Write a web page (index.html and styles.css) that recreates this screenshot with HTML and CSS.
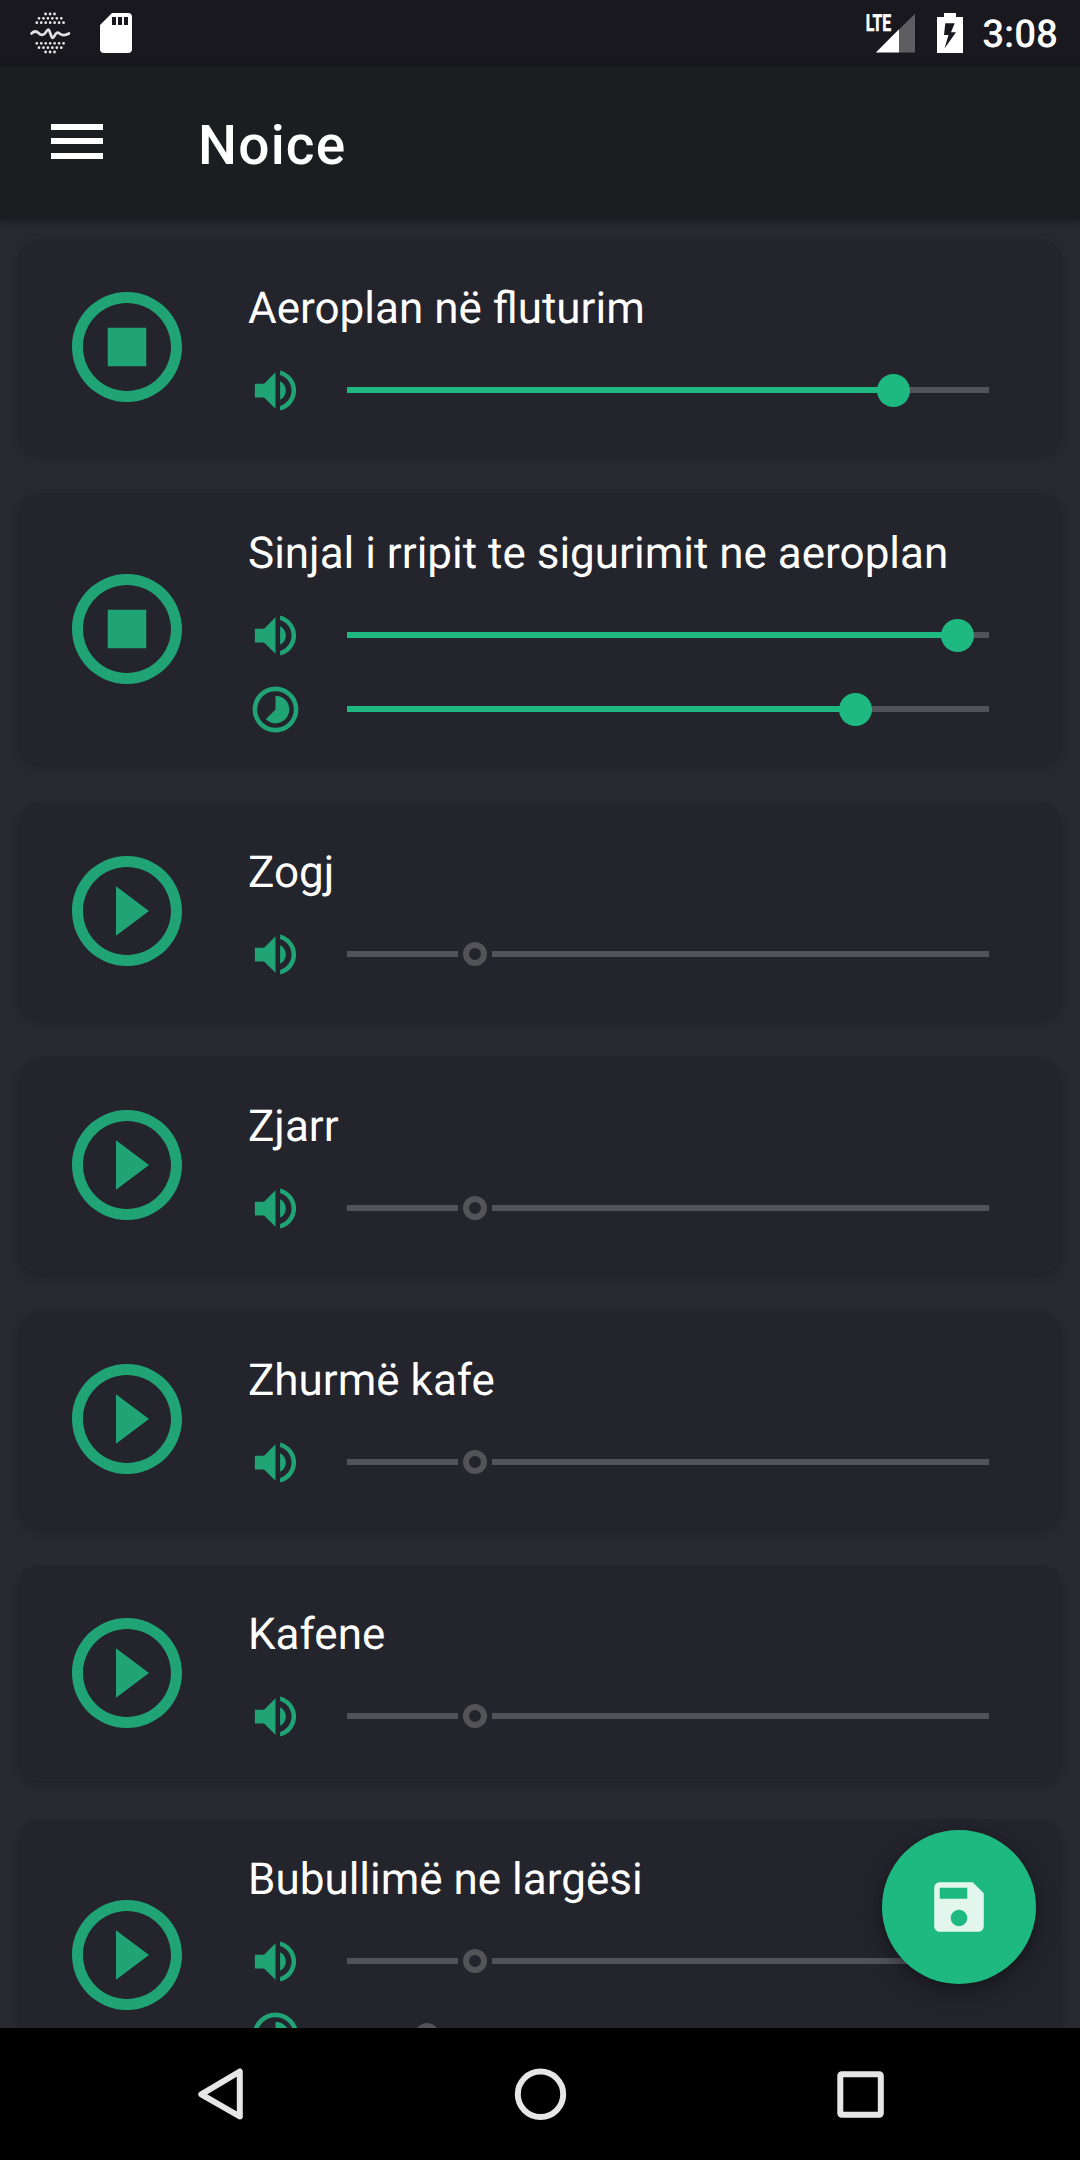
FILE: index.html
```html
<!DOCTYPE html>
<html lang="sq">
<head>
<meta charset="utf-8">
<title>Noice</title>
<link rel="stylesheet" href="styles.css">
</head>
<body>
<svg class="defs" aria-hidden="true">
  <symbol id="stop" viewBox="0 0 24 24"><path d="M12 2C6.48 2 2 6.48 2 12s4.48 10 10 10 10-4.48 10-10S17.52 2 12 2zm0 18c-4.41 0-8-3.59-8-8s3.59-8 8-8 8 3.59 8 8-3.59 8-8 8zM8.5 8.5h7v7h-7z"/></symbol>
  <symbol id="play" viewBox="0 0 24 24"><path d="M10 16.5l6-4.5-6-4.5v9zM12 2C6.48 2 2 6.48 2 12s4.48 10 10 10 10-4.48 10-10S17.52 2 12 2zm0 18c-4.41 0-8-3.59-8-8s3.59-8 8-8 8 3.59 8 8-3.59 8-8 8z"/></symbol>
  <symbol id="volume" viewBox="0 0 24 24"><path d="M3 9v6h4l5 5V4L7 9H3zm13.500 3c0-1.770-1.020-3.290-2.500-4.030v8.050c1.480-.73 2.500-2.250 2.500-4.020zM14 3.230v2.060c2.890.86 5 3.540 5 6.710s-2.110 5.850-5 6.710v2.060c4.010-.91 7-4.490 7-8.770s-2.990-7.860-7-8.770z"/></symbol>
  <symbol id="period" viewBox="0 0 24 24"><path d="M12 2a10 10 0 1 0 0 20 10 10 0 0 0 0-20zm0 18a8 8 0 1 1 0-16 8 8 0 0 1 0 16zM12 6v6l-4.240 4.240A6 6 0 1 0 12 6z"/></symbol>
</svg>
<div class="screen">
  <header class="status">
    <div class="status-group">
      <svg class="logo" viewBox="0 0 42 44">
        <g class="dots">
          <path d="M16.600 3h9M10 7.350h22.500M7.800 11.700h26.800M7.800 32.300h26.800M10 36.700h22.500M16.600 41h9"/>
        </g>
        <path class="wave" d="M2.500 22.500C5 20 7.500 20 9.500 22c2.500 2.700 5.500 2.700 7.400-.8 1.700-3.500 3-3.500 3.900-.2l1.600 4.200c.8 2.200 1.700 2.200 2.900 0 1.600-3.500 3-4.600 5.200-2.700 2.500 2 5.200 2.400 9.500 0"/>
      </svg>
      <svg class="sdcard" viewBox="0 0 32 40"><path fill-rule="evenodd" d="M12 0h16a4 4 0 0 1 4 4v32a4 4 0 0 1-4 4H4a4 4 0 0 1-4-4V12zM12 4v8h4V4zm6 0v8h4V4zm6 0v8h4V4z"/></svg>
    </div>
    <div class="status-group">
      <svg class="signal" viewBox="0 0 49 40">
        <text x="-.3" y="18" textLength="25.500" lengthAdjust="spacingAndGlyphs">LTE</text>
        <path class="weak" d="M33 16.500 49 .8V39.500H33z"/><path d="M9.800 39.500 33 16.200v23.300z"/>
      </svg>
      <svg class="battery" viewBox="0 0 26 40"><path fill-rule="evenodd" d="M7 0h12v4h7v36H0V4h7zM8.300 10.300 7 22h4.500L7.500 35.500 19 19.200h-5l3.700-8.900z"/></svg>
      <span class="clock">3:08</span>
    </div>
  </header>
  <div class="appbar">
    <div class="menu"><i></i><i></i><i></i></div>
    <h1>Noice</h1>
  </div>
  <main class="list">
    <article class="card"><svg class="toggle"><use href="#stop"/></svg><div class="body"><h2>Aeroplan në fluturim</h2>
      <div class="row"><svg class="icon"><use href="#volume"/></svg><div class="slider on" style="--v:85.1%"><b></b></div></div></div></article>
    <article class="card tall"><svg class="toggle"><use href="#stop"/></svg><div class="body"><h2>Sinjal i rripit te sigurimit ne aeroplan</h2>
      <div class="row"><svg class="icon"><use href="#volume"/></svg><div class="slider on" style="--v:95.1%"><b></b></div></div>
      <div class="row"><svg class="icon"><use href="#period"/></svg><div class="slider on" style="--v:79.2%"><b></b></div></div></div></article>
    <article class="card"><svg class="toggle"><use href="#play"/></svg><div class="body"><h2>Zogj</h2>
      <div class="row"><svg class="icon"><use href="#volume"/></svg><div class="slider" style="--v:128px"><b></b></div></div></div></article>
    <article class="card low"><svg class="toggle"><use href="#play"/></svg><div class="body"><h2>Zjarr</h2>
      <div class="row"><svg class="icon"><use href="#volume"/></svg><div class="slider" style="--v:128px"><b></b></div></div></div></article>
    <article class="card low"><svg class="toggle"><use href="#play"/></svg><div class="body"><h2>Zhurmë kafe</h2>
      <div class="row"><svg class="icon"><use href="#volume"/></svg><div class="slider" style="--v:128px"><b></b></div></div></div></article>
    <article class="card low"><svg class="toggle"><use href="#play"/></svg><div class="body"><h2>Kafene</h2>
      <div class="row"><svg class="icon"><use href="#volume"/></svg><div class="slider" style="--v:128px"><b></b></div></div></div></article>
    <article class="card tall low"><svg class="toggle"><use href="#play"/></svg><div class="body"><h2>Bubullimë ne largësi</h2>
      <div class="row"><svg class="icon"><use href="#volume"/></svg><div class="slider" style="--v:128px"><b></b></div></div>
      <div class="row"><svg class="icon"><use href="#period"/></svg><div class="slider" style="--v:80px"><b></b></div></div></div></article>
    <div class="fab"><svg viewBox="0 0 24 24"><path d="M17 3H5c-1.110 0-2 .9-2 2v14c0 1.100.89 2 2 2h14c1.100 0 2-.9 2-2V7l-4-4zm-5 16c-1.660 0-3-1.340-3-3s1.340-3 3-3 3 1.340 3 3-1.340 3-3 3zm3-10H5V5h10v4z"/></svg></div>
  </main>
  <nav class="nav">
    <svg viewBox="0 0 56 56"><path d="M9.300 28.300 47.800 5.500v45z"/></svg>
    <svg viewBox="0 0 56 56"><circle cx="28.500" cy="28.300" r="22.700"/></svg>
    <svg viewBox="0 0 56 56"><rect x="8.300" y="8.200" width="40.500" height="40.500" rx="1.500"/></svg>
  </nav>
</div>
</body>
</html>
```
FILE: styles.css
```css
* { box-sizing: border-box; }
body { margin: 0; background: #292932; color: #fff; font-family: Roboto, sans-serif; text-rendering: geometricPrecision; }
svg { display: block; flex: none; fill: #fff; }
.defs { display: none; }
h1, h2 { margin: 0; }

.screen { display: flex; flex-direction: column; width: 1080px; height: 2160px; overflow: hidden; }

.status { display: flex; justify-content: space-between; height: 66px; flex: none; padding: 11px 22px 0 29px; background: #19181e; }
.status-group { display: flex; align-items: flex-start; }
.logo { width: 42px; height: 44px; }
.dots { stroke: #e6e6e6; stroke-width: 2.8; stroke-linecap: round; stroke-dasharray: 0 4.46; }
.wave { fill: none; stroke: #e2e2e2; stroke-width: 2.7; stroke-linecap: round; stroke-linejoin: round; }
.sdcard { width: 32px; height: 40px; margin: 2px 0 0 29px; }
.signal { width: 49px; height: 40px; margin-top: 2px; overflow: visible; }
.signal text { font-size: 23.5px; font-weight: 700; stroke: #fff; stroke-width: .5px; }
.weak { fill: #5e5d61; }
.battery { width: 26px; height: 40px; margin: 2px 19px 0 22px; }
.clock { font-size: 38.5px; font-weight: 500; line-height: 48px; }

.appbar { position: relative; z-index: 1; display: flex; align-items: center; height: 154px; flex: none; padding-left: 51px; background: #1c1d21; box-shadow: 0 3px 10px rgba(0, 0, 0, .3); }
.menu { display: flex; flex-direction: column; gap: 8.5px; width: 52px; margin-bottom: 4px; }
.menu i { height: 6px; background: #fff; }
.appbar h1 { margin: 6px 0 0 95px; font-size: 55px; font-weight: 500; line-height: 64px; letter-spacing: 1.2px; }

.list { position: relative; display: flex; flex-direction: column; gap: 38px; height: 1808px; flex: none; padding: 19px 18px 0; overflow: hidden; }
.card { display: flex; align-items: center; flex: none; height: 216px; padding: 0 73px 0 43px; border-radius: 22px; background: #24242d; box-shadow: 0 3px 8px rgba(0, 0, 0, .18); }
.card.tall { height: 272px; }
.card.low { box-shadow: 0 6px 8px rgba(0, 0, 0, .18); }
.toggle { width: 132px; height: 132px; fill: #20a476; }
.body { flex: 1; margin-left: 55px; }
.body h2 { height: 86px; font-size: 44px; font-weight: 400; line-height: 82px; white-space: nowrap; }
.row { display: flex; align-items: center; height: 74px; }
.icon { width: 55px; height: 55px; fill: #20a476; }
.slider { position: relative; width: 642px; height: 6px; margin-left: 44px; background: linear-gradient(to right, #52525a calc(var(--v) - 17px), transparent 0 calc(var(--v) + 17px), #52525a 0); }
.slider.on { background: linear-gradient(to right, #1eb980 var(--v), #52525a 0); }
.slider b { position: absolute; left: var(--v); top: 3px; width: 24px; height: 24px; margin: -12px 0 0 -12px; border: 6px solid #545458; border-radius: 50%; }
.slider.on b { width: 33px; height: 33px; margin: -16.500px 0 0 -16.500px; border: 0; background: #1eb980; }

.fab { position: absolute; right: 44px; bottom: 44px; display: grid; place-items: center; width: 154px; height: 154px; border-radius: 50%; background: #1eb980; box-shadow: 0 9px 24px rgba(0, 0, 0, .3), 0 2px 10px rgba(0, 0, 0, .16); }
.fab svg { width: 66px; height: 66px; fill: #e2f6ee; }

.nav { position: relative; display: grid; grid-template-columns: repeat(3, 320px); justify-content: center; place-items: center; height: 132px; flex: none; background: #000; }
.nav svg { width: 56px; height: 56px; fill: none; stroke: #e6e6e6; stroke-width: 6; stroke-linejoin: round; }
```
